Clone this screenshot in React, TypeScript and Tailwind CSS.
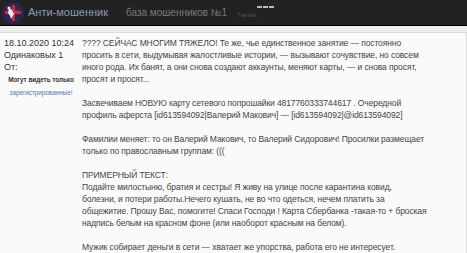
export default function App() {
  return (
    <div className="w-[467px] h-[253px] overflow-hidden bg-[#fafafa] font-['Liberation_Sans',Arial,sans-serif]">
      {/* top bar */}
      <div className="h-[26px] bg-[#222] border-b border-black flex items-center">
        <svg width="22" height="22" viewBox="0 0 22 22" className="ml-[2px] mt-[1px]">
          <circle cx="11" cy="11" r="11" fill="#2e2450" />
          <path d="M3 9 L10 7 L10 3 L13 3 L13 8 L19 9 L19 12 L13 12 L13 19 L10 19 L10 12 L3 12 Z" fill="#c0303a" />
          <path d="M7 6 L10 8 L12 12 L9 17 L8 14 L6 11 Z" fill="#e8e8ee" />
          <circle cx="7" cy="6" r="1.6" fill="#e8e8ee" />
        </svg>
        <span className="ml-[4px] text-[11px] text-[#8c9ab5]">Анти-мошенник</span>
        <span className="ml-[18px] text-[10px] text-[#7a7a7a]">база мошенников №1</span>
        <div className="ml-[10px] relative text-[6px] text-[#555] mt-[5px]">
          Translit
          <div className="absolute left-[20px] top-[-5px] flex gap-[1px]">
            <div className="w-[5px] h-[2px] bg-[#bbb]" />
            <div className="w-[5px] h-[2px] bg-[#bbb]" />
            <div className="w-[5px] h-[2px] bg-[#bbb]" />
          </div>
        </div>
      </div>
      <div className="h-[6px] bg-[#efefef]" />

      {/* post */}
      <div className="border-t border-r border-[#dcdcdc] flex pt-[4px] leading-[12px]">
        <div className="w-[78px] pl-[4px] shrink-0 text-[#333] text-[9px]">
          <div>18.10.2020 10:24</div>
          <div>Одинаковых 1</div>
          <div>От:</div>
          <div className="text-center mt-[1px]">
            <div className="text-[6.3px] font-bold text-[#333] leading-[12px]">Могут видеть только</div>
            <div className="text-[6.3px] text-[#4a78b0] leading-[14px]">зарегистрированные!</div>
          </div>
        </div>
        <div className="flex-1 pl-[4px] text-[#444] text-[8.5px] tracking-[-0.1px] whitespace-nowrap">
          <p>
            ???? СЕЙЧАС МНОГИМ ТЯЖЕЛО! Те же, чье единственное занятие — постоянно
            <br />
            просить в сети, выдумывая жалостливые истории, — вызывают сочувствие, но совсем
            <br />
            иного рода. Их банят, а они снова создают аккаунты, меняют карты, — и снова просят,
            <br />
            просят и просят...
          </p>
          <br />
          <p>
            Засвечиваем НОВУЮ карту сетевого попрошайки 4817760333744617 . Очередной
            <br />
            профиль аферста [id613594092|Валерий Макович] — [id613594092|@id613594092]
          </p>
          <br />
          <p>
            Фамилии меняет: то он Валерий Макович, то Валерий Сидорович! Просилки размещает
            <br />
            только по православным группам: (((
          </p>
          <br />
          <p>
            ПРИМЕРНЫЙ ТЕКСТ:
            <br />
            Подайте милостыню, братия и сестры! Я живу на улице после карантина ковид,
            <br />
            болезни, и потери работы.Нечего кушать, не во что одеться, нечем платить за
            <br />
            общежитие. Прошу Вас, помогите! Спаси Господи ! Карта Сбербанка -такая-то + броская
            <br />
            надпись белым на красном фоне (или наоборот красным на белом).
          </p>
          <br />
          <p>Мужик собирает деньги в сети — хватает же упорства, работа его не интересует.</p>
        </div>
      </div>
    </div>
  );
}
